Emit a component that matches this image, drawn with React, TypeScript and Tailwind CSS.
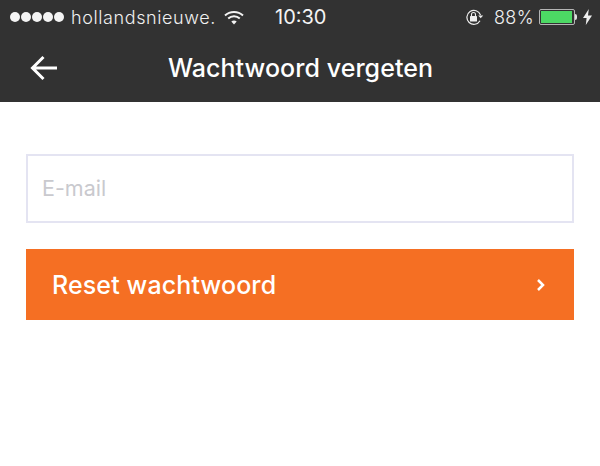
/**
 * Password reset screen with iOS status bar
 */
import * as React from "react"

const font = { sans: "font-['Inter','Liberation_Sans',sans-serif]" }

const SignalDots = () => (
    <div className="flex gap-[1px]">
        {[0, 1, 2, 3, 4].map((i) => (
            <span key={i} className="h-[10px] w-[10px] rounded-full bg-[#f4f4f4]" />
        ))}
    </div>
)

const WifiIcon = () => (
    <svg width="20" height="15" viewBox="0 0 20 15" fill="none" stroke="#f4f4f4" strokeWidth="2">
        <path d="M1 5.5C6 .8 14 .8 19 5.5" />
        <path d="M4.2 8.6c3.300-3 8.300-3 11.600 0" />
        <path d="M10 14.500l-2.700-3c1.600-1.300 3.800-1.300 5.400 0z" fill="#f4f4f4" stroke="none" />
    </svg>
)

const RotationLockIcon = () => (
    <svg width="19" height="17" viewBox="0 0 19 17" fill="none">
        <path d="M15.500 6A7 7 0 1 0 15 11.800" stroke="#efefef" strokeWidth="1.200" />
        <path d="M13.200 6.500h5l-2.500 2.800z" fill="#efefef" />
        <rect x="5" y="7" width="7" height="5.500" rx="0.600" fill="#efefef" />
        <path d="M6.500 7V5.500a2 2 0 0 1 4 0V7" stroke="#efefef" strokeWidth="1.100" />
    </svg>
)

const Battery = () => (
    <div className="flex items-center">
        <div className="h-[16px] w-[36px] rounded-[2px] border border-[#b5b5b5] p-[1px]">
            <div className="h-full w-[31px] bg-[#4cd964]" />
        </div>
        <div className="h-[6px] w-[2px] rounded-r-full bg-[#e0e0e0]" />
    </div>
)

const BoltIcon = () => (
    <svg width="9" height="16" viewBox="0 0 9 16" fill="#efefef">
        <path d="M5.800 0 0 9h3.600L2.800 16 9 6.500H5z" />
    </svg>
)

const StatusBar = () => (
    <div className="flex h-[34px] items-center text-[18px] font-light tracking-[0.6px] text-[#f0f0f0]">
        <div className="ml-[10px]">
            <SignalDots />
        </div>
        <span className="ml-[7px] w-[153px] whitespace-nowrap">hollandsnieuwe.</span>
        <WifiIcon />
        <span className="ml-[31px] whitespace-nowrap text-[20px] font-normal tracking-normal text-[#f4f4f4]">10:30</span>
        <div className="ml-auto mr-[8px] flex items-center">
            <RotationLockIcon />
            <span className="ml-[10px] mr-[5px] whitespace-nowrap tracking-[0.4px]">88%</span>
            <Battery />
            <div className="ml-[6px]">
                <BoltIcon />
            </div>
        </div>
    </div>
)

const Header = () => (
    <div className="flex h-[68px] items-center">
        <svg className="ml-[30px] shrink-0" width="28" height="26" viewBox="0 0 28 26" fill="none" stroke="#fff" strokeWidth="3">
            <path d="M27 13H3M13.500 2 2.500 13l11 11" />
        </svg>
        <span className="ml-[110px] whitespace-nowrap pt-[1px] text-[25px] font-medium tracking-[0.05px] text-white">Wachtwoord vergeten</span>
    </div>
)

export default function App() {
    return (
        <div className={`h-[466px] w-[600px] overflow-hidden bg-white ${font.sans}`}>
            <div className="h-[102px] bg-[#323232]">
                <StatusBar />
                <Header />
            </div>
            <div className="flex flex-col gap-[26px] px-[26px] pt-[52px]">
                <div className="flex h-[69px] items-center border-2 border-[#e4e4f2] pl-[14px] text-[21.5px] text-[#c9c9ce]">
                    E-mail
                </div>
                <div className="flex h-[71px] items-center justify-between bg-[#f56f23] pl-[26px] pr-[28px]">
                    <span className="pt-[2px] text-[25px] font-medium tracking-[0.12px] text-white">Reset wachtwoord</span>
                    <svg width="10" height="14" viewBox="0 0 10 14" fill="none" stroke="#fff" strokeWidth="2.500">
                        <path d="M2 2l5 5-5 5" />
                    </svg>
                </div>
            </div>
        </div>
    )
}
